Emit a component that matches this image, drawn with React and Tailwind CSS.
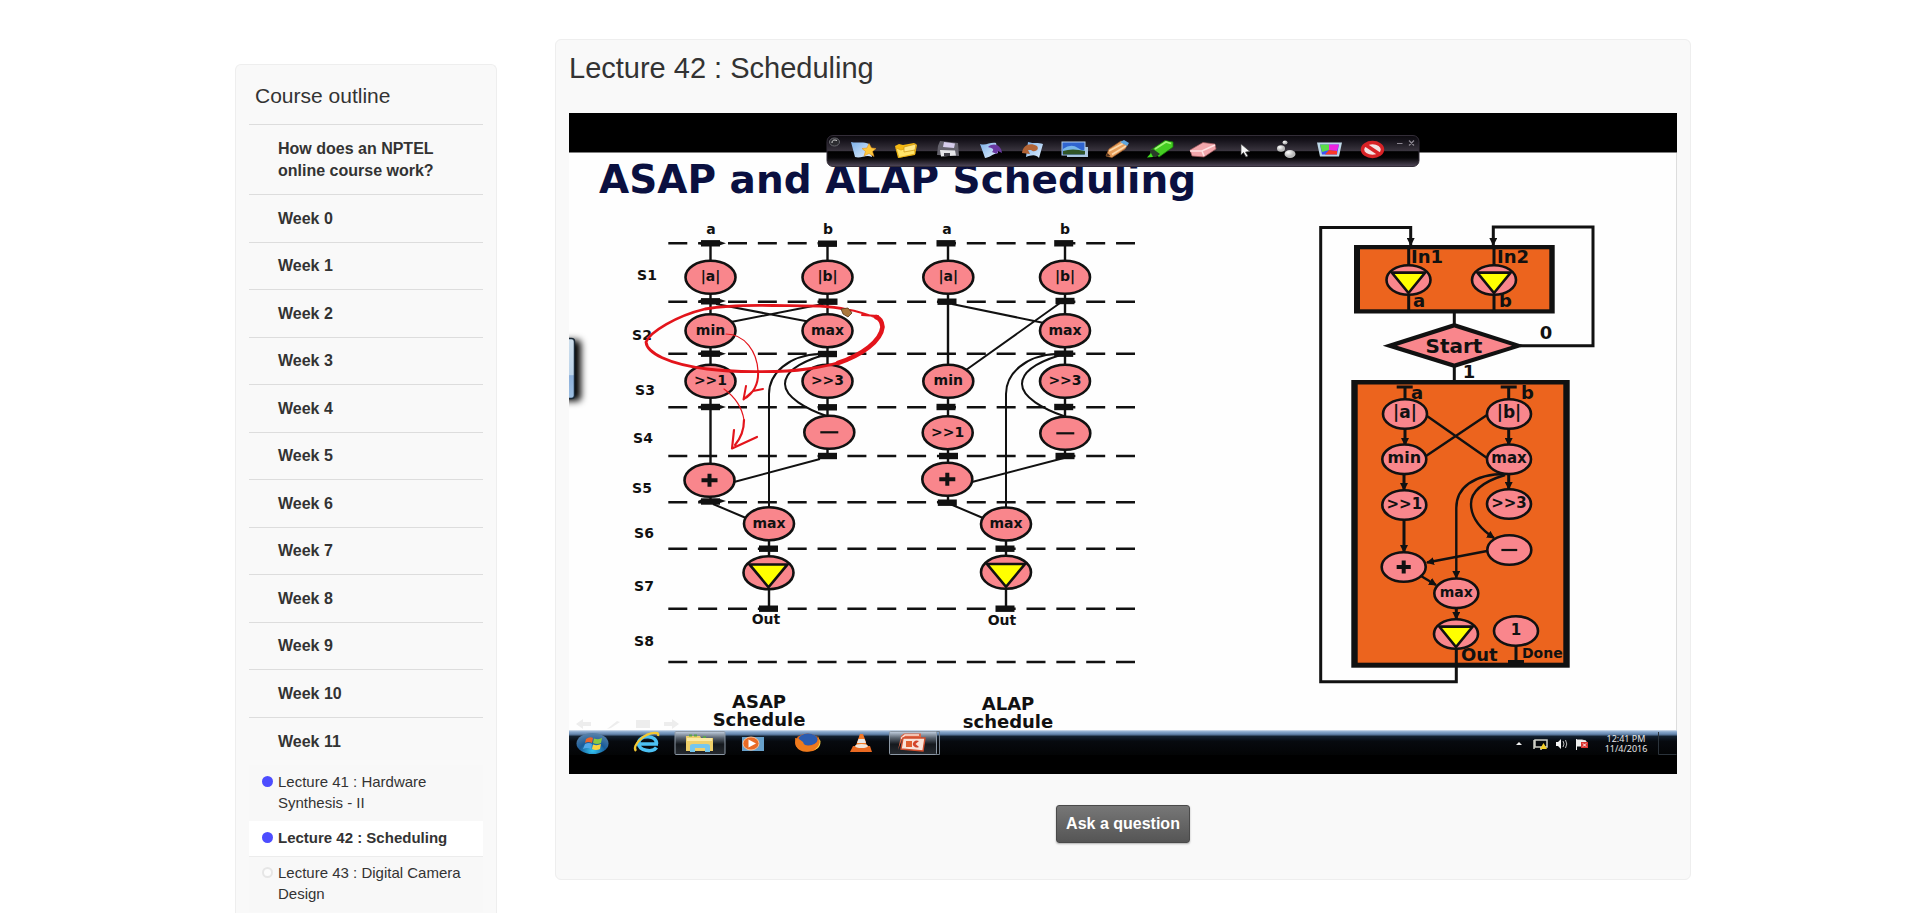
import React from "react";

const INK = "#111111";
const PINK = "#f9868c";

const weeks = ["Week 0", "Week 1", "Week 2", "Week 3", "Week 4", "Week 5", "Week 6", "Week 7", "Week 8", "Week 9", "Week 10", "Week 11"];

const lectures = [
  { title: "Lecture 41 : Hardware Synthesis - II", seen: true },
  { title: "Lecture 42 : Scheduling", seen: true, current: true },
  { title: "Lecture 43 : Digital Camera Design", seen: false },
];

function LectureLink({ title, seen, current }) {
  return (
    <li className={current ? "relative bg-white shadow-[0_1px_0_#ececec]" : "bg-[#f8f8f8]"}>
      <a
        href="#lecture"
        aria-current={current ? "page" : undefined}
        className={`flex items-start gap-1 pt-[6px] pr-3 pb-2 pl-[13px] text-[15px] leading-[21px] ${current ? "font-bold" : ""}`}
      >
        <span className="flex h-5 w-3 shrink-0 items-center">
          <span className={seen ? "h-[11px] w-[11px] rounded-full bg-[#4d4dff]" : "h-[11px] w-[11px] rounded-full border-2 border-[#e6e6e6] bg-[#fcfcfc]"} />
        </span>
        {title}
      </a>
    </li>
  );
}

function CourseOutline() {
  return (
    <nav aria-label="Course outline" className="mt-16 w-[262px] shrink-0 rounded-t-md border border-b-0 border-[#eeeeee] bg-[#f9f9f9] px-[13px] pt-[17px]">
      <h2 className="px-[6px] pb-[14px] text-[21px] leading-7">Course outline</h2>
      <ul>
        <li className="border-t border-[#dddddd]">
          <a href="#intro" className="block pt-[13px] pr-7 pb-3 pl-[29px] font-bold leading-[22px]">How does an NPTEL online course work?</a>
        </li>
        {weeks.map((week, i) => (
          <li key={week} className="border-t border-[#dddddd]">
            <a href="#week" className={`block pr-7 pb-3 pl-[29px] font-bold leading-[22px] ${i % 2 && i < 11 ? "pt-[12px]" : "pt-[13px]"}`}>{week}</a>
            {i === 11 && (
              <ul>
                {lectures.map((lecture) => <LectureLink key={lecture.title} {...lecture} />)}
              </ul>
            )}
          </li>
        ))}
      </ul>
    </nav>
  );
}

/* ---- slide drawing ---- */

function Label({ x, y, size = 14, anchor = "middle", children }) {
  return <text x={x} y={y} fontSize={size} textAnchor={anchor} fill={INK}>{children}</text>;
}

function Node({ x, y, rx = 25, ry = 16.5, text, size = 14 }) {
  return (
    <g>
      <ellipse cx={x} cy={y} rx={rx} ry={ry} fill={PINK} stroke={INK} strokeWidth="2.6" />
      {text === "+" && <path d={`M${x - rx * 0.32} ${y}h${rx * 0.64}M${x} ${y - 6.5}v13`} stroke={INK} strokeWidth="4" />}
      {text === "−" && <path d={`M${x - rx * 0.36} ${y}h${rx * 0.72}`} stroke={INK} strokeWidth="2.2" />}
      {text === "▽" && <path d={`M${x - rx * 0.76} ${y - ry * 0.5}H${x + rx * 0.76}L${x} ${y + ry * 0.88}Z`} fill="#ffff00" stroke={INK} strokeWidth="2.6" />}
      {!["+", "−", "▽"].includes(text) && <Label x={x} y={y + 4} size={size}>{text}</Label>}
    </g>
  );
}

const stateLines = [243.3, 301.7, 353.7, 407.3, 456, 502.3, 548.7, 608.7, 662];

const stateNames = [["S1", 647, 280], ["S2", 642, 340], ["S3", 645, 395], ["S4", 643, 443], ["S5", 642, 493], ["S6", 644, 538], ["S7", 644, 591], ["S8", 644, 646]];

const registers = [
  [710.5, 243.3], [827.5, 243.7], [710.5, 301.3], [828, 301.7], [710.5, 353.7], [827.5, 354], [710.5, 407], [827.5, 407.3], [827.5, 456], [710.5, 501.5], [768.5, 548.7], [768.5, 608.7],
  [946, 243.3], [1063.7, 243.3], [947, 301.7], [1065, 301], [1063.7, 353.7], [946, 407], [1063.7, 407], [948.5, 456], [1065, 456], [947.3, 502.7], [1005, 548.7], [1005, 608.7],
];

const scheduleNodes = [
  [710.5, 277.3, "|a|"], [827.5, 277.3, "|b|"], [710.5, 330.7, "min"], [827.5, 330.7, "max"], [710.5, 381.3, ">>1"], [827.5, 381.3, ">>3"], [829.3, 432.3, "−"], [709.5, 480.3, "+"], [769, 523.7, "max"], [768.5, 572.7, "▽"],
  [948.3, 277.3, "|a|"], [1065, 277.3, "|b|"], [1065, 330.7, "max"], [948.3, 381.3, "min"], [1065, 381.3, ">>3"], [947.7, 432.7, ">>1"], [1065.3, 433.3, "−"], [947.3, 479.3, "+"], [1006, 524, "max"], [1006, 572.3, "▽"],
];

const bendingEdges = "M820 354C788 355 769 374 769 394V508M822 355.5C798 363 785 373 785 384C785 397 806 409 828 416.500";

function Schedules() {
  return (
    <g>
      {stateLines.map((y) => (
        <path key={y} d={`M668.300 ${y}H1135`} stroke={INK} strokeWidth="2.6" strokeDasharray="19 10.850" />
      ))}
      <g fill="none" stroke={INK} strokeWidth="2.4">
        <path d="M710.500 243V502M827.500 243V456M769 508V608M948 243V502M1065 243V456M1006 508V608" />
        <g strokeWidth="2">
          <path d={bendingEdges} />
          <path d={bendingEdges} transform="translate(237 0)" />
          <path d="M716 304L808 321.500M823 304L731 322M820 459L734 482M713 504L746 518" />
          <path d="M952 304L1044 323M1060 303L966 370M1064 458L972 482M950 504L983 518" />
        </g>
      </g>
      {registers.map(([x, y]) => <rect key={`${x}-${y}`} x={x - 9.5} y={y - 3.2} width="19" height="6.400" fill={INK} />)}
      {[243.3, 301, 353.7, 407, 501].map((y) => <path key={y} d={`M698 ${y}l4 -2h18l6 2l-6 2h-18z`} fill={INK} />)}
      {scheduleNodes.map(([x, y, t]) => <Node key={`${x}-${y}`} x={x} y={y} text={t} />)}
      {stateNames.map(([t, x, y]) => <Label key={t} x={x} y={y}>{t}</Label>)}
      <Label x={711} y={234}>a</Label>
      <Label x={828} y={234}>b</Label>
      <Label x={947} y={234}>a</Label>
      <Label x={1065} y={234}>b</Label>
      <Label x={766} y={624}>Out</Label>
      <Label x={1002} y={625}>Out</Label>
      <Label x={759} y={708} size={18}>ASAP</Label>
      <Label x={759} y={726} size={18}>Schedule</Label>
      <Label x={1008} y={710} size={18}>ALAP</Label>
      <Label x={1008} y={728} size={18}>schedule</Label>
    </g>
  );
}

function RedInk() {
  return (
    <g fill="none" stroke="#e3141b" strokeLinecap="round" strokeLinejoin="round">
      <path strokeWidth="2.8" d="M850 311C838 305 806 306 773 305.500C745 305 722 306 705 309C676 316 650 332 646 342C647 353 668 364 707 369C730 372 780 373 807 369C822 367 836 364 847 360" />
      <path strokeWidth="4.6" d="M838 363C862 355 881 341 882.500 327C882 321 879 318 876 317" />
      <path strokeWidth="2" d="M850 310C862 312 870 316 878 318M862 315L878 316" />
      <path strokeWidth="1.200" d="M726 334C745 334 757 352 758 371" />
      <path strokeWidth="2" d="M758 371C759 384 753 394 744 399M746 386L743.500 399.500L753 391L763 389" />
      <path strokeWidth="1.200" d="M724 389C735 397 742 407 744 420" />
      <path strokeWidth="2.2" d="M744 420C744 432 740 439 735 445M734 430L732 448.500L757 437" />
    </g>
  );
}

const chartNodes = [
  [1408.5, 280, "▽"], [1494, 280, "▽"], [1405, 414, "|a|", 17], [1509, 414, "|b|", 17], [1404.3, 459.3, "min", 16], [1509, 459.3, "max", 15], [1404.3, 505, ">>1", 15], [1509, 504, ">>3", 15],
  [1509.3, 550, "−"], [1403.7, 567, "+"], [1456.3, 593.3, "max", 14], [1456, 634, "▽"], [1516, 631, "1", 15],
];

function FlowChart() {
  return (
    <g>
      <defs>
        <marker id="tip" viewBox="0 0 8 8" refX="7" refY="4" markerWidth="8" markerHeight="8" markerUnits="userSpaceOnUse" orient="auto">
          <path d="M0 0L8 4L0 8Z" fill={INK} />
        </marker>
      </defs>
      <rect x="1354" y="245" width="200.700" height="68.500" fill={INK} />
      <rect x="1360" y="249.300" width="189.300" height="60" fill="#ec641e" />
      <rect x="1351.300" y="380" width="218.400" height="287.700" fill={INK} />
      <rect x="1357.700" y="384.500" width="205.600" height="278.200" fill="#ec641e" />
      <g fill="none" stroke={INK} strokeWidth="3">
        <path d="M1456.300 648V681.700H1320.700V227.500H1410.700V245" markerEnd="url(#tip)" />
        <path d="M1520 345.700H1593V227H1493.300V245" markerEnd="url(#tip)" />
        <path d="M1408.700 245V313M1494 245V313M1454.300 313V324M1454.300 367V381" />
        <path d="M1396.700 387H1412.700M1405 387V400M1500.700 387H1516.700M1508.700 387V400M1516 645V661M1508 661.500H1524" />
        <path d="M1405 428V445" markerEnd="url(#tip)" />
        <path d="M1508.700 428V445" markerEnd="url(#tip)" />
        <path d="M1404 474V490" markerEnd="url(#tip)" />
        <path d="M1508.700 474V489" markerEnd="url(#tip)" />
        <path d="M1404 519V552" markerEnd="url(#tip)" />
        <path d="M1456.300 608V619" markerEnd="url(#tip)" />
        <path strokeWidth="2.400" d="M1427 416L1487 458M1487 415L1426 456" />
        <path strokeWidth="2.400" d="M1506 474C1473 474 1456.300 488 1456.300 508V578" markerEnd="url(#tip)" />
        <path strokeWidth="2.400" d="M1505 475C1482 482 1471 492 1471 504C1471 518 1482 530 1494 538" markerEnd="url(#tip)" />
        <path strokeWidth="2.400" d="M1487 551L1427 562.500" markerEnd="url(#tip)" />
        <path strokeWidth="2.400" d="M1421 576L1436 585" markerEnd="url(#tip)" />
      </g>
      <path d="M1382.700 345.700L1454.300 323L1525 345.700L1454.300 368Z" fill={INK} />
      <path d="M1397 345.700L1454.300 327.500L1512 345.700L1454.300 363.500Z" fill={PINK} />
      {chartNodes.map(([x, y, t, size]) => <Node key={`${x}-${y}`} x={x} y={y} rx={22} ry={14.8} text={t} size={size} />)}
      <Label x={1454} y={353} size={20}>Start</Label>
      <Label x={1411} y={263} size={18} anchor="start">In1</Label>
      <Label x={1497} y={263} size={18} anchor="start">In2</Label>
      <Label x={1413} y={307} size={18} anchor="start">a</Label>
      <Label x={1499} y={307} size={18} anchor="start">b</Label>
      <Label x={1546} y={339} size={18}>0</Label>
      <Label x={1469} y={378} size={18}>1</Label>
      <Label x={1411} y={399} size={18} anchor="start">a</Label>
      <Label x={1521} y={399} size={18} anchor="start">b</Label>
      <Label x={1461} y={661} size={18} anchor="start">Out</Label>
      <Label x={1522} y={658} size={14} anchor="start">Done</Label>
    </g>
  );
}

function Toolbar() {
  return (
    <g>
      <defs>
        <linearGradient id="bar" x1="0" y1="0" x2="0" y2="1">
          <stop offset="0" stopColor="#0c0a0e" />
          <stop offset="0.15" stopColor="#15121a" />
          <stop offset="0.500" stopColor="#3a353f" />
          <stop offset="0.520" stopColor="#000000" />
          <stop offset="0.720" stopColor="#060507" />
          <stop offset="1" stopColor="#51485a" />
        </linearGradient>
        <linearGradient id="sheet" x1="0" y1="0" x2="1" y2="1">
          <stop offset="0" stopColor="#7db1ea" />
          <stop offset="1" stopColor="#e4f1fd" />
        </linearGradient>
        <radialGradient id="ball" cx="0.350" cy="0.300">
          <stop offset="0" stopColor="#ffffff" />
          <stop offset="1" stopColor="#b9b9b9" />
        </radialGradient>
      </defs>
      <rect x="827" y="135.500" width="592" height="31" rx="6" fill="url(#bar)" stroke="#332d38" />
      <ellipse cx="834.500" cy="142" rx="5" ry="4" fill="#2c2c30" stroke="#68686e" />
      <path d="M832 143C832 140 834 139.500 837 140.500" stroke="#d8d8d8" fill="none" />

      <path d="M851 142C857 143.500 863 141 869 144L872 157C866 154 861 159 855 157Z" fill="url(#sheet)" />
      <path d="M869 143.500L871.500 148L876 148.500L872.500 151.500L874 156.500L869 153.500L864 156L865.500 151.500L862 148.500L867 148Z" fill="#ffc93c" stroke="#e09422" strokeWidth="0.600" />

      <path d="M895 146L899 144L903 145L914 143L917 145L915 155L898 158Z" fill="#f5b912" />
      <path d="M896 148L901 150L914 146L915 154L899 157.500Z" fill="#ffe46a" stroke="#dda20c" strokeWidth="0.700" />
      <path d="M904 147L916 144L915 150L904 152Z" fill="#ffe98a" stroke="#c99410" strokeWidth="0.700" />

      <path d="M940 141L958 143L959 156L937 155L938 146Z" fill="#64626c" />
      <path d="M944 142L955 143.500L954 148L943 147Z" fill="#d6cdec" />
      <path d="M940 150L955 150.500L956 155.500L941 156.500Z" fill="#e6e6e9" />
      <path d="M944 153L950 153L950 156L944 156Z" fill="#403e46" />

      <path d="M980 144C986 146 990 142 996 143L998 153C992 154 989 158 985 158Z" fill="url(#sheet)" />
      <path d="M988 147C994 142 1001 145 1002 153L998 151L997 154L992 152C995 149 992 148 988 147Z" fill="#6a3aa2" />

      <path d="M1028 142C1034 144 1038 142 1043 144L1039 158C1036 154 1031 155 1026 157Z" fill="url(#sheet)" />
      <path d="M1022 153C1023 145 1030 142 1037 146C1040 150 1034 153 1031 150L1028 150L1030 154Z" fill="#b26436" />

      <rect x="1067" y="147" width="21" height="10" fill="#a9c5de" />
      <rect x="1062" y="142" width="23" height="13" fill="#2f64cf" stroke="#b4cee9" />
      <path d="M1063 149Q1071 143 1078 148T1085 147V151H1063Z" fill="#78b7e9" />
      <path d="M1063 151Q1072 148 1085 151V154.500H1063Z" fill="#315527" />

      <path d="M1106 156L1109 149L1121 141L1128 144L1125 149L1112 157.500Z" fill="#e79e5b" stroke="#a15e2d" strokeWidth="0.700" />
      <path d="M1109 151L1123 143.500M1112 154.500L1126 146" stroke="#fbd8aa" strokeWidth="1.600" />
      <path d="M1120 142L1124 140L1129 143L1127 146Z" fill="#5fa6dc" />
      <path d="M1106 156.500L1107.500 153L1110.500 156Z" fill="#50331d" />

      <path d="M1151 150L1165 140.500L1173 142L1173 147L1159 157Z" fill="#45cd22" stroke="#168108" strokeWidth="0.800" />
      <path d="M1155 149L1166 142L1171 143.500" fill="none" stroke="#a0f576" strokeWidth="1.800" />
      <path d="M1150 151L1153 149L1160 154L1156 157L1150 157Z" fill="#293b28" />
      <path d="M1147 157.500L1151 153L1153 157Z" fill="#3ee11d" />

      <path d="M1190 150L1203 142.500L1215 144L1216 149L1204 157L1192 156Z" fill="#f1a6ab" stroke="#9c5459" strokeWidth="0.700" />
      <path d="M1190 151L1202 151L1215 145M1202 151L1204 156" fill="none" stroke="#ffe1e2" strokeWidth="1.600" />

      <path d="M1241 144L1250 151.500L1245.500 152L1248 156L1246 157L1243.500 152.500L1241 155Z" fill="#f7f7f7" stroke="#424242" strokeWidth="0.700" />

      <ellipse cx="1285" cy="142.500" rx="2.500" ry="2" fill="url(#ball)" />
      <ellipse cx="1281" cy="148.500" rx="4" ry="3.200" fill="url(#ball)" />
      <ellipse cx="1290" cy="154" rx="5.500" ry="4" fill="url(#ball)" />

      <path d="M1317 142.500H1342L1339 156.500H1320Z" fill="#bed8e7" />
      <path d="M1320 144.500H1339L1337 154.500H1322Z" fill="#3f54f2" />
      <path d="M1320 144.500H1329V150L1322 152Z" fill="#5bde48" />
      <path d="M1329 144.500H1339L1337 151L1329 150Z" fill="#ec26df" />
      <path d="M1329 150L1337 151V154.500H1325Z" fill="#fa3927" />

      <ellipse cx="1372.500" cy="149.500" rx="10" ry="7" fill="#f3e4e4" stroke="#d82226" strokeWidth="3.400" />
      <path d="M1365 144.500L1380 154.500" stroke="#d82226" strokeWidth="3.600" />
      <path d="M1397 143.500H1402.500M1409 140.500L1414 145.500M1414 140.500L1409 145.500" stroke="#8c8791" strokeWidth="1.200" />
    </g>
  );
}

function Taskbar() {
  return (
    <g>
      <defs>
        <linearGradient id="task" x1="0" y1="0" x2="0" y2="1">
          <stop offset="0" stopColor="#dbe4ef" />
          <stop offset="0.070" stopColor="#8aa9cd" />
          <stop offset="0.170" stopColor="#6485ad" />
          <stop offset="0.260" stopColor="#12202f" />
          <stop offset="0.450" stopColor="#070a0f" />
          <stop offset="1" stopColor="#030405" />
        </linearGradient>
        <linearGradient id="active" x1="0" y1="0" x2="0" y2="1">
          <stop offset="0" stopColor="#c4d2e3" />
          <stop offset="0.280" stopColor="#5a6470" />
          <stop offset="0.550" stopColor="#15191e" />
          <stop offset="1" stopColor="#262a2f" />
        </linearGradient>
        <radialGradient id="orb" cx="0.500" cy="0.850" r="0.800">
          <stop offset="0" stopColor="#31c5f2" />
          <stop offset="0.500" stopColor="#195c9a" />
          <stop offset="1" stopColor="#557fa8" />
        </radialGradient>
      </defs>
      <rect x="569" y="730" width="1108" height="25" fill="url(#task)" />

      <ellipse cx="592.500" cy="743.500" rx="16" ry="10.500" fill="url(#orb)" />
      <path d="M586 739Q590 736 593 738L592 743Q588 741 585 743Z" fill="#ec642a" />
      <path d="M594 738.500Q599 740 602 738L601 743Q597 745 593 743Z" fill="#8bca42" />
      <path d="M585 744Q589 742 592 744L591 749Q587 747 583 749Z" fill="#51a9e9" />
      <path d="M593 744.500Q597 746 601 744L600 749Q596 751 592 749Z" fill="#fcd33e" />

      <path d="M658 744H639M656.500 744C657 735 640 734 638.500 743C638 751 653 753 656.500 747.500" fill="none" stroke="#4cc1f3" strokeWidth="3.600" />
      <path d="M636 751C631 746 645 732 656 733Q659 733 658 736" fill="none" stroke="#f4c832" strokeWidth="2.300" />

      <rect x="675" y="731.500" width="50" height="23" rx="1" fill="url(#active)" stroke="#8d99a6" />
      <path d="M686 736H700L701 738H713V751H686Z" fill="#efd06a" />
      <path d="M687 738H712V741H687Z" fill="#fbeaa2" />
      <path d="M689 735.500h3M694 735.500h3M703 737h3" stroke="#58a44c" strokeWidth="2" />
      <path d="M690 752V746Q690 744 693 744H707Q710 744 710 746V752H705V748H695V752Z" fill="#74c6ec" />

      <rect x="742" y="737" width="22" height="14" fill="#68a1cb" />
      <ellipse cx="751" cy="743.500" rx="8" ry="6.500" fill="#e96b25" stroke="#fac094" />
      <path d="M748.500 739.500L756 743.500L748.500 747.500Z" fill="#fff" />

      <ellipse cx="807.500" cy="742.500" rx="12.500" ry="9" fill="#e96c1d" />
      <ellipse cx="808" cy="739.500" rx="9.500" ry="6" fill="#2b5cb0" />
      <path d="M795 738L799 739L803 742Q804 746 809 746Q815 746 818 741V736Q823 747 813 751Q800 754 796 746Z" fill="#ee7a1d" />
      <path d="M816 735Q824 743 814 750Q821 748 820.500 741Z" fill="#fcd544" />

      <path d="M857.500 742L860 734H863L866 742Z" fill="#ee712b" />
      <path d="M855 748L860 734.500H862.500L868 748Z" fill="#f37b28" />
      <path d="M858.500 739H864.500L866 743H857Z" fill="#e9e9e9" />
      <path d="M850 752L853 746H870L872 752Z" fill="#ea6a22" />
      <ellipse cx="861.500" cy="746" rx="6.500" ry="2" fill="#f2e5da" />

      <path d="M935 731.500H939.500V754.500H935" fill="none" stroke="#727e8a" />
      <rect x="889.500" y="731.500" width="47" height="23" rx="1" fill="url(#active)" stroke="#8d99a6" />
      <path d="M898 750L901 736L904 733.500H921V738L902 739Z" fill="#df6544" />
      <path d="M901 738.500L905 735H919" fill="none" stroke="#f9e3d8" strokeWidth="1.500" />
      <path d="M903 738H925L923 751L901 749Z" fill="#f9e3d8" stroke="#cf4d2c" strokeWidth="1.400" />
      <path d="M906 741h6v6h-6z" fill="#e1602f" />
      <path d="M919 741A4 3.500 0 1 0 919 747L915.500 744Z" fill="#d3452a" />

      <path d="M1516 745L1519 742L1522 745Z" fill="#f0f0f0" />
      <path d="M1535 740H1547V747H1535ZM1534 740V749M1541 747V750" fill="none" stroke="#cfcfc6" strokeWidth="1.500" />
      <path d="M1540 749L1543.500 743L1547 749Z" fill="#f4cf28" />
      <path d="M1556 742H1558L1561 739V749L1558 746H1556Z" fill="#f4f4f4" />
      <path d="M1563 741Q1565 744 1563 747M1565.500 740Q1568 744 1565.500 748" fill="none" stroke="#bcbcbc" />
      <path d="M1576.500 739V750M1577 740H1582L1586 741V746H1577" stroke="#eeeeee" fill="#eeeeee" />
      <rect x="1581" y="742" width="7" height="6" fill="#da3330" />
      <path d="M1583 743.500L1586 746.500M1586 743.500L1583 746.500" stroke="#fff" />
      <g fontFamily="Noto Sans, sans-serif" fontSize="9" fill="#e6e6e6" textAnchor="middle" fontWeight="400">
        <text x="1626" y="742">12:41 PM</text>
        <text x="1626" y="752">11/4/2016</text>
      </g>
      <path d="M1658.500 732V754.500H1676.500" fill="none" stroke="#2b333b" />
    </g>
  );
}

function LectureVideo() {
  return (
    <svg viewBox="569 113 1108 661" role="img" aria-label="ASAP and ALAP Scheduling" className="block h-auto w-full" fontFamily="DejaVu Sans, sans-serif" fontWeight="700">
      <defs>
        <filter id="soft" x="-100%" y="-20%" width="300%" height="140%"><feGaussianBlur stdDeviation="3.500" /></filter>
        <linearGradient id="tab" x1="0" y1="0" x2="0" y2="1">
          <stop offset="0" stopColor="#cfdfec" />
          <stop offset="0.600" stopColor="#bdd4ea" />
          <stop offset="0.620" stopColor="#8db0da" />
          <stop offset="1" stopColor="#9dbfe2" />
        </linearGradient>
        <clipPath id="slide"><rect x="569" y="153" width="1108" height="577" /></clipPath>
      </defs>
      <rect x="569" y="113" width="1108" height="661" fill="#000000" />
      <rect x="569" y="152.500" width="1108" height="577.500" fill="#fefefe" />
      <path d="M1676.500 153V730" stroke="#dddddd" />
      <g clipPath="url(#slide)">
        <rect x="560" y="340" width="21" height="61" rx="4" fill="#000000" filter="url(#soft)" />
        <rect x="560" y="338.500" width="14.500" height="60" rx="3" fill="url(#tab)" stroke="#1b2a38" strokeWidth="1.500" />
      </g>
      <text x="599" y="193" fontSize="39" fill="#0a1040">ASAP and ALAP Scheduling</text>
      <Schedules />
      <RedInk />
      <path d="M841 309L848 308L852 313L848 317L843 314Z" fill="#a9773b" stroke="#5b3a1a" strokeWidth="0.800" />
      <FlowChart />
      <g fill="#ededed">
        <path d="M576 724L583 719V722H591V726H583V729Z" />
        <path d="M607 729L617 721L620 722L611 728Z" />
        <rect x="636" y="720" width="14" height="8" />
        <path d="M679 724L672 719V722H664V726H672V729Z" />
      </g>
      <Taskbar />
      <Toolbar />
    </svg>
  );
}

export default function App() {
  return (
    <div className="flex min-h-screen gap-[58px] bg-white pr-[229px] pl-[235px] font-['Liberation_Sans',Arial,sans-serif] text-base text-[#333333]">
      <CourseOutline />
      <main className="mt-[39px] min-w-0 flex-1 self-start rounded-md border border-[#eeeeee] bg-[#f9f9f9] px-[13px] pt-3 pb-9">
        <h1 className="mb-[29px] text-[29px] leading-8">Lecture 42 : Scheduling</h1>
        <LectureVideo />
        <div className="mt-[31px] flex justify-center">
          <button
            type="button"
            className="h-[38px] rounded-[3px] border border-[#4a4a4a] bg-gradient-to-b from-[#777777] to-[#555555] px-[9px] font-bold text-white shadow-[0_1px_2px_rgba(0,0,0,0.3)]"
          >
            Ask a question
          </button>
        </div>
      </main>
    </div>
  );
}
